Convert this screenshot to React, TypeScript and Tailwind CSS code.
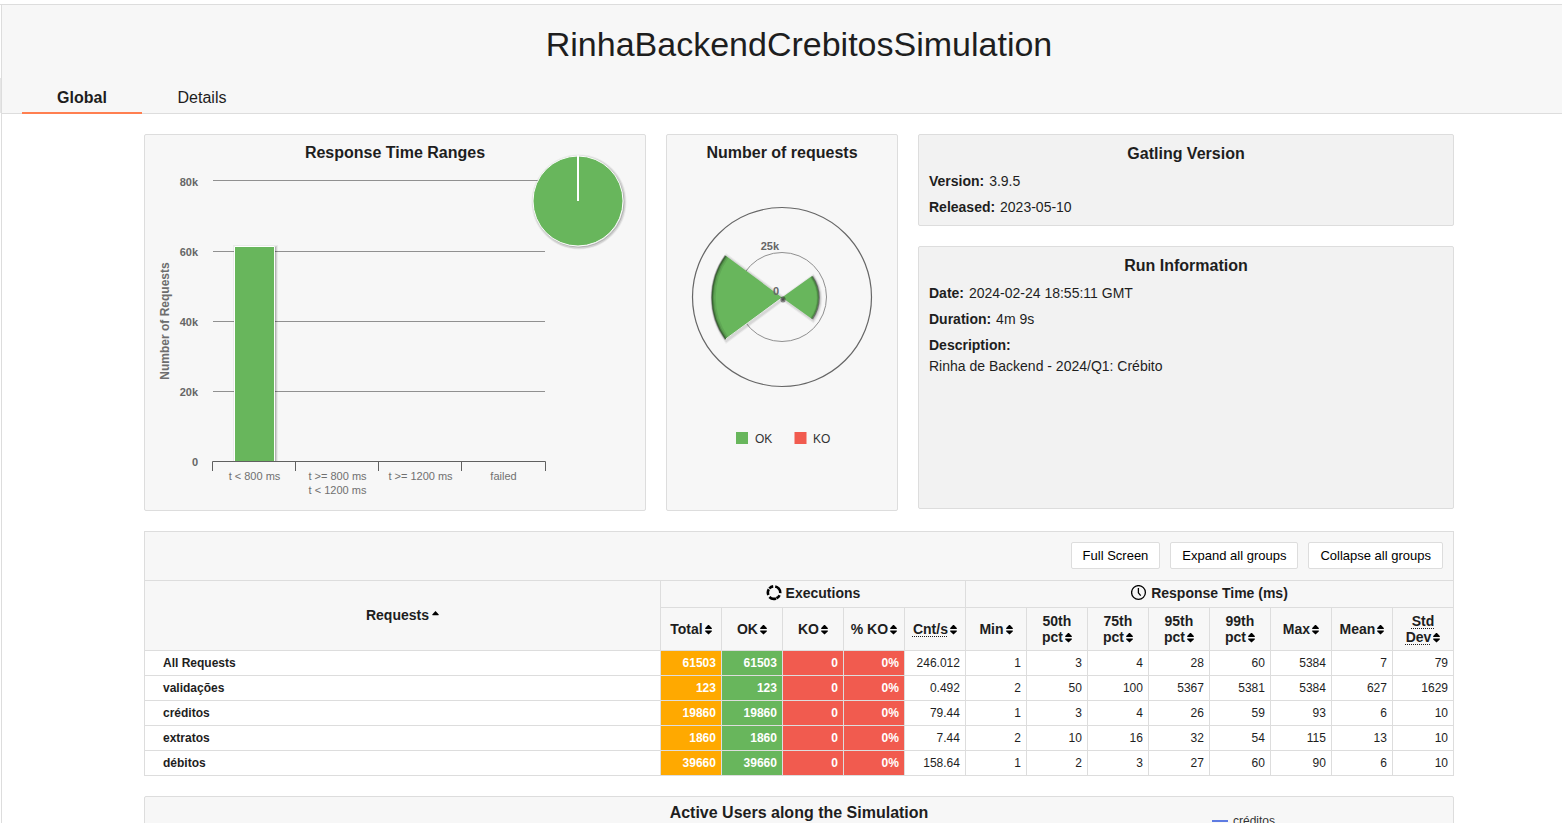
import React from "react";

type Row = { name: string; counts: string[]; stats: string[] };

const rows: Row[] = [
  { name: "All Requests", counts: ["61503", "61503", "0", "0%"], stats: ["246.012", "1", "3", "4", "28", "60", "5384", "7", "79"] },
  { name: "validações", counts: ["123", "123", "0", "0%"], stats: ["0.492", "2", "50", "100", "5367", "5381", "5384", "627", "1629"] },
  { name: "créditos", counts: ["19860", "19860", "0", "0%"], stats: ["79.44", "1", "3", "4", "26", "59", "93", "6", "10"] },
  { name: "extratos", counts: ["1860", "1860", "0", "0%"], stats: ["7.44", "2", "10", "16", "32", "54", "115", "13", "10"] },
  { name: "débitos", counts: ["39660", "39660", "0", "0%"], stats: ["158.64", "1", "2", "3", "27", "60", "90", "6", "10"] },
];

const countColors = ["bg-[#ffa900]", "bg-[#68b65c]", "bg-[#f15b4f]", "bg-[#f15b4f]"];

function SortIcon() {
  return (
    <svg viewBox="0 0 7 10" className="ml-[2px] inline-block h-[10px] w-[7px] align-[-1px]" aria-hidden="true">
      <path d="M3.500 -.5 6.800 3V4H.2V3ZM3.500 9.500 6.800 6.500V5.500H.2V6.500Z" fill="#000" />
    </svg>
  );
}

function SortAscIcon() {
  return (
    <svg viewBox="0 0 7 10" className="ml-[3px] inline-block h-[10px] w-[7px] align-[-1px]" aria-hidden="true">
      <path d="M3.500 0 6.500 3.200V4.200H.5V3.200Z" fill="#000" />
    </svg>
  );
}

function ExecutionsIcon() {
  return (
    <svg viewBox="0 0 16 16" className="mr-1 inline-block size-4 align-[-3px]" fill="none" stroke="#000" strokeWidth="2.6" aria-hidden="true">
      <path d="M9.200 1.500A6.300 6.300 0 0 1 12.900 3.700" />
      <path d="M12.700 3.400A6.300 6.300 0 0 1 14.300 8.200" />
      <path d="M13.600 10.200A6.300 6.300 0 0 1 10.400 13.300" />
      <path d="M10 13.500A6.300 6.300 0 0 1 3.400 12" />
      <path d="M2.400 10A6.300 6.300 0 0 1 2.800 4.200" />
      <path d="M3.300 3.500A6.300 6.300 0 0 1 7.200 1.400" />
    </svg>
  );
}

function ClockIcon() {
  return (
    <svg viewBox="0 0 16 16" className="mr-1 inline-block size-4 align-[-3px]" fill="none" stroke="#000" strokeWidth="1.3" aria-hidden="true">
      <circle cx="7.5" cy="7.5" r="6.900" />
      <path d="M7.400 3V7.800L9.700 10.600" />
    </svg>
  );
}

function RangesChart() {
  const grid = [
    { y: 180, t: "80k" },
    { y: 251, t: "60k" },
    { y: 321, t: "40k" },
    { y: 391, t: "20k" },
    { y: 461, t: "0" },
  ];
  return (
    <svg viewBox="145 169 500 341" className="block w-full overflow-visible" role="img" aria-label="Response Time Ranges">
      {grid.map((g) => (
        <g key={g.t}>
          {g.t !== "0" && <path d={`M213 ${g.y + 0.5}H545`} stroke="#909090" strokeWidth="1" />}
          <text x="198" y={g.t === "80k" ? 186 : g.y + 5} textAnchor="end" fontSize="11" fontWeight="bold" fill="#666">
            {g.t}
          </text>
        </g>
      ))}
      <text transform="translate(169 321) rotate(-90)" textAnchor="middle" fontSize="12" fontWeight="bold" fill="#6d6d6d">
        Number of Requests
      </text>
      <g fill="none" stroke="#000" transform="translate(1 1)">
        <path d="M234.500 460V246.500H274.500V460" strokeWidth="5" opacity="0.05" />
        <path d="M234.500 460V246.500H274.500V460" strokeWidth="3" opacity="0.1" />
        <path d="M234.500 460V246.500H274.500V460" strokeWidth="1" opacity="0.15" />
      </g>
      <path d="M234.500 461V246.500H274.500V461" fill="#68b65c" stroke="#fff" />
      <path d="M212.500 471V461.500H545.500V471M295.500 461.500V471M378.500 461.500V471M461.500 461.500V471" fill="none" stroke="#606060" />
      <g fontSize="11" fill="#707070" textAnchor="middle">
        <text x="254.500" y="480">{"t < 800 ms"}</text>
        <text x="337.500" y="480">{"t >= 800 ms"}</text>
        <text x="337.500" y="494">{"t < 1200 ms"}</text>
        <text x="420.500" y="480">{"t >= 1200 ms"}</text>
        <text x="503.500" y="480">failed</text>
      </g>
      <g fill="none" stroke="#000">
        <circle cx="579" cy="202" r="45" strokeWidth="5" opacity="0.05" />
        <circle cx="579" cy="202" r="45" strokeWidth="3" opacity="0.1" />
        <circle cx="579" cy="202" r="45" strokeWidth="1" opacity="0.15" />
      </g>
      <circle cx="578" cy="201" r="45" fill="#68b65c" stroke="#fff" />
      <path d="M578 201V155.500" stroke="#fff" strokeWidth="2" />
    </svg>
  );
}

function PolarChart() {
  const left = "M782 297.500 725.500 255.500A71 71 0 0 0 725.500 339.500Z";
  const right = "M782 297.500 812 276A37 37 0 0 1 812 319Z";
  return (
    <svg viewBox="667 169 230 341" className="block w-full overflow-visible" role="img" aria-label="Number of requests">
      <circle cx="782" cy="297" r="89.500" fill="none" stroke="#666" strokeWidth="1.200" />
      <circle cx="782" cy="297" r="44.500" fill="none" stroke="#909090" />
      {[left, right].map((d) => (
        <g key={d}>
          <g fill="none" stroke="#000" transform="translate(1 1)">
            <path d={d} strokeWidth="5" opacity="0.05" />
            <path d={d} strokeWidth="3" opacity="0.08" />
          </g>
          <path d={d} fill="#68b65c" />
        </g>
      ))}
      <g fill="none" stroke="#000">
        <path d="M726.500 256.500A70 70 0 0 0 726.500 338.500" strokeWidth="5" opacity="0.08" />
        <path d="M726 256A70.500 70.500 0 0 0 726 339" strokeWidth="3" opacity="0.15" />
        <path d="M725.500 256A71 71 0 0 0 725.500 339" strokeWidth="1.500" opacity="0.3" />
        <path d="M812 276.500A37 37 0 0 1 812 319" strokeWidth="4" opacity="0.08" />
        <path d="M812 276.500A37 37 0 0 1 812 319" strokeWidth="2.500" opacity="0.2" />
        <path d="M812.500 276.500A37 37 0 0 1 812.500 319" strokeWidth="1" opacity="0.3" />
      </g>
      <path d="M781 298.500 726 338.800" stroke="#e6e6e6" strokeWidth="1" />
      <rect x="780.500" y="296.500" width="5" height="6" rx="2" fill="#333" opacity="0.55" />
      <circle cx="783" cy="299.500" r="1.200" fill="#333" opacity="0.6" />
      <g fontSize="11" fontWeight="bold" fill="#666" textAnchor="end">
        <text x="779" y="250">25k</text>
        <text x="779" y="295">0</text>
      </g>
      <rect x="736" y="432" width="12" height="12" fill="#68b65c" />
      <rect x="794.500" y="432" width="12" height="12" fill="#f15b4f" />
      <g fontSize="12" fill="#333">
        <text x="755" y="443">OK</text>
        <text x="813" y="443">KO</text>
      </g>
    </svg>
  );
}

const panel = "min-w-0 rounded-xs border border-[#ddd]";
const th = "border border-[#ddd] bg-[#f7f7f7] p-0 text-center text-sm leading-4 font-bold";
const groupTh = "border border-[#ddd] bg-[#f7f7f7] px-0 pt-0 pb-[2px] text-center text-sm leading-4 font-bold";
const abbr = "cursor-help underline decoration-dotted decoration-1 underline-offset-2";

function SortHead({ lines, hint }: { lines: string[]; hint?: boolean }) {
  return (
    <th className={th} scope="col">
      {lines.map((line, i) => (
        <span key={line} className="block whitespace-nowrap">
          <span className={hint ? abbr : ""}>{line}</span>
          {i === lines.length - 1 && <SortIcon />}
        </span>
      ))}
    </th>
  );
}

function ToolButton({ children }: { children: React.ReactNode }) {
  return (
    <button type="button" className="h-[27px] rounded-xs border border-[#ddd] bg-white px-[11px] text-[13px] leading-4 whitespace-nowrap text-black">
      {children}
    </button>
  );
}

export default function App() {
  return (
    <div className="flex h-screen overflow-hidden bg-white pt-1 font-['Liberation_Sans',Arial,sans-serif] text-[#1e1e1e]">
      <div className="w-px shrink-0 border-t border-[#ddd] pt-[73px]">
        <div className="h-[35px] bg-[#e6e6e6]" />
      </div>
      <div className="min-w-0 flex-1 border-t border-l border-[#ddd]">
        <header className="border-b border-[#ddd] bg-[#f7f7f7]">
          <h1 className="pt-[19px] pl-[34px] text-center text-[34px] leading-[40px]">RinhaBackendCrebitosSimulation</h1>
          <nav className="-mb-px flex pt-[17px] pl-5 text-center text-base">
            <a href="#global" className="h-[33px] w-[120px] border-b-2 border-[#ff7f50] pt-[5px] leading-6 font-bold">Global</a>
            <a href="#details" className="h-[33px] w-[120px] pt-[5px] leading-6">Details</a>
          </nav>
        </header>

        <div className="pt-5 pl-[34px]">
          <main className="mx-auto flex max-w-[1310px] flex-col gap-5">
            <div className="grid grid-cols-[502fr_232fr_536fr] items-start gap-5">
              <section className={`${panel} bg-[#f7f7f7]`}>
                <h2 className="pt-[6px] pb-1 text-center text-base leading-6 font-bold">Response Time Ranges</h2>
                <RangesChart />
              </section>
              <section className={`${panel} bg-[#f7f7f7]`}>
                <h2 className="pt-[6px] pb-1 text-center text-base leading-6 font-bold">Number of requests</h2>
                <PolarChart />
              </section>
              <div className="flex flex-col gap-5 text-sm">
                <section className={`${panel} h-[92px] bg-[#f2f2f2] px-[10px]`}>
                  <h2 className="pt-[7px] pb-[2px] text-center text-base leading-6 font-bold">Gatling Version</h2>
                  <p className="leading-[26px]"><b>Version:</b> <span className="pl-px">3.9.5</span></p>
                  <p className="leading-[26px]"><b>Released:</b> <span className="pl-px">2023-05-10</span></p>
                </section>
                <section className={`${panel} h-[263px] bg-[#f2f2f2] px-[10px]`}>
                  <h2 className="pt-[7px] pb-[2px] text-center text-base leading-6 font-bold">Run Information</h2>
                  <p className="leading-[26px]"><b>Date:</b> <span className="pl-px">2024-02-24 18:55:11 GMT</span></p>
                  <p className="leading-[26px]"><b>Duration:</b> <span className="pl-px">4m 9s</span></p>
                  <p className="leading-[26px]"><b>Description:</b></p>
                  <p className="leading-4">Rinha de Backend - 2024/Q1: Crébito</p>
                </section>
              </div>
            </div>

            <section>
              <div className="flex h-[49px] justify-end gap-[10px] border-x border-t border-[#ddd] bg-[#f7f7f7] px-[10px] pt-[10px]">
                <ToolButton>Full Screen</ToolButton>
                <ToolButton>Expand all groups</ToolButton>
                <ToolButton>Collapse all groups</ToolButton>
              </div>
              <table className="w-full table-fixed border-collapse">
                <colgroup>
                  <col />
                  {Array.from({ length: 13 }, (_, i) => (
                    <col key={i} className="w-[61px]" />
                  ))}
                </colgroup>
                <thead>
                  <tr className="h-[27px]">
                    <th className={groupTh} rowSpan={2} scope="col">Requests<SortAscIcon /></th>
                    <th className={groupTh} colSpan={5} scope="colgroup"><ExecutionsIcon />Executions</th>
                    <th className={groupTh} colSpan={8} scope="colgroup"><ClockIcon />Response Time (ms)</th>
                  </tr>
                  <tr className="h-[43px]">
                    <SortHead lines={["Total"]} />
                    <SortHead lines={["OK"]} />
                    <SortHead lines={["KO"]} />
                    <SortHead lines={["% KO"]} />
                    <SortHead lines={["Cnt/s"]} hint />
                    <SortHead lines={["Min"]} />
                    <SortHead lines={["50th", "pct"]} />
                    <SortHead lines={["75th", "pct"]} />
                    <SortHead lines={["95th", "pct"]} />
                    <SortHead lines={["99th", "pct"]} />
                    <SortHead lines={["Max"]} />
                    <SortHead lines={["Mean"]} />
                    <SortHead lines={["Std", "Dev"]} hint />
                  </tr>
                </thead>
                <tbody className="text-xs">
                  {rows.map((row) => (
                    <tr key={row.name} className="h-[25px]">
                      <th scope="row" className="border border-[#ddd] py-0 pl-[18px] text-left font-bold">{row.name}</th>
                      {row.counts.map((v, i) => (
                        <td key={i} className={`border border-[#ddd] py-0 pr-[5px] text-right font-bold text-white ${countColors[i]}`}>{v}</td>
                      ))}
                      {row.stats.map((v, i) => (
                        <td key={i} className="border border-[#ddd] py-0 pr-[5px] text-right">{v}</td>
                      ))}
                    </tr>
                  ))}
                </tbody>
              </table>
            </section>

            <section className={`${panel} relative h-[270px] bg-[#f7f7f7]`}>
              <h2 className="pt-1 text-center text-base leading-6 font-bold">Active Users along the Simulation</h2>
              <div className="absolute top-4 right-[178px] flex items-center gap-[5px] text-xs text-[#333]">
                <span className="h-[2px] w-4 bg-[#5e7be2]" />
                créditos
              </div>
            </section>
          </main>
        </div>
      </div>
    </div>
  );
}
